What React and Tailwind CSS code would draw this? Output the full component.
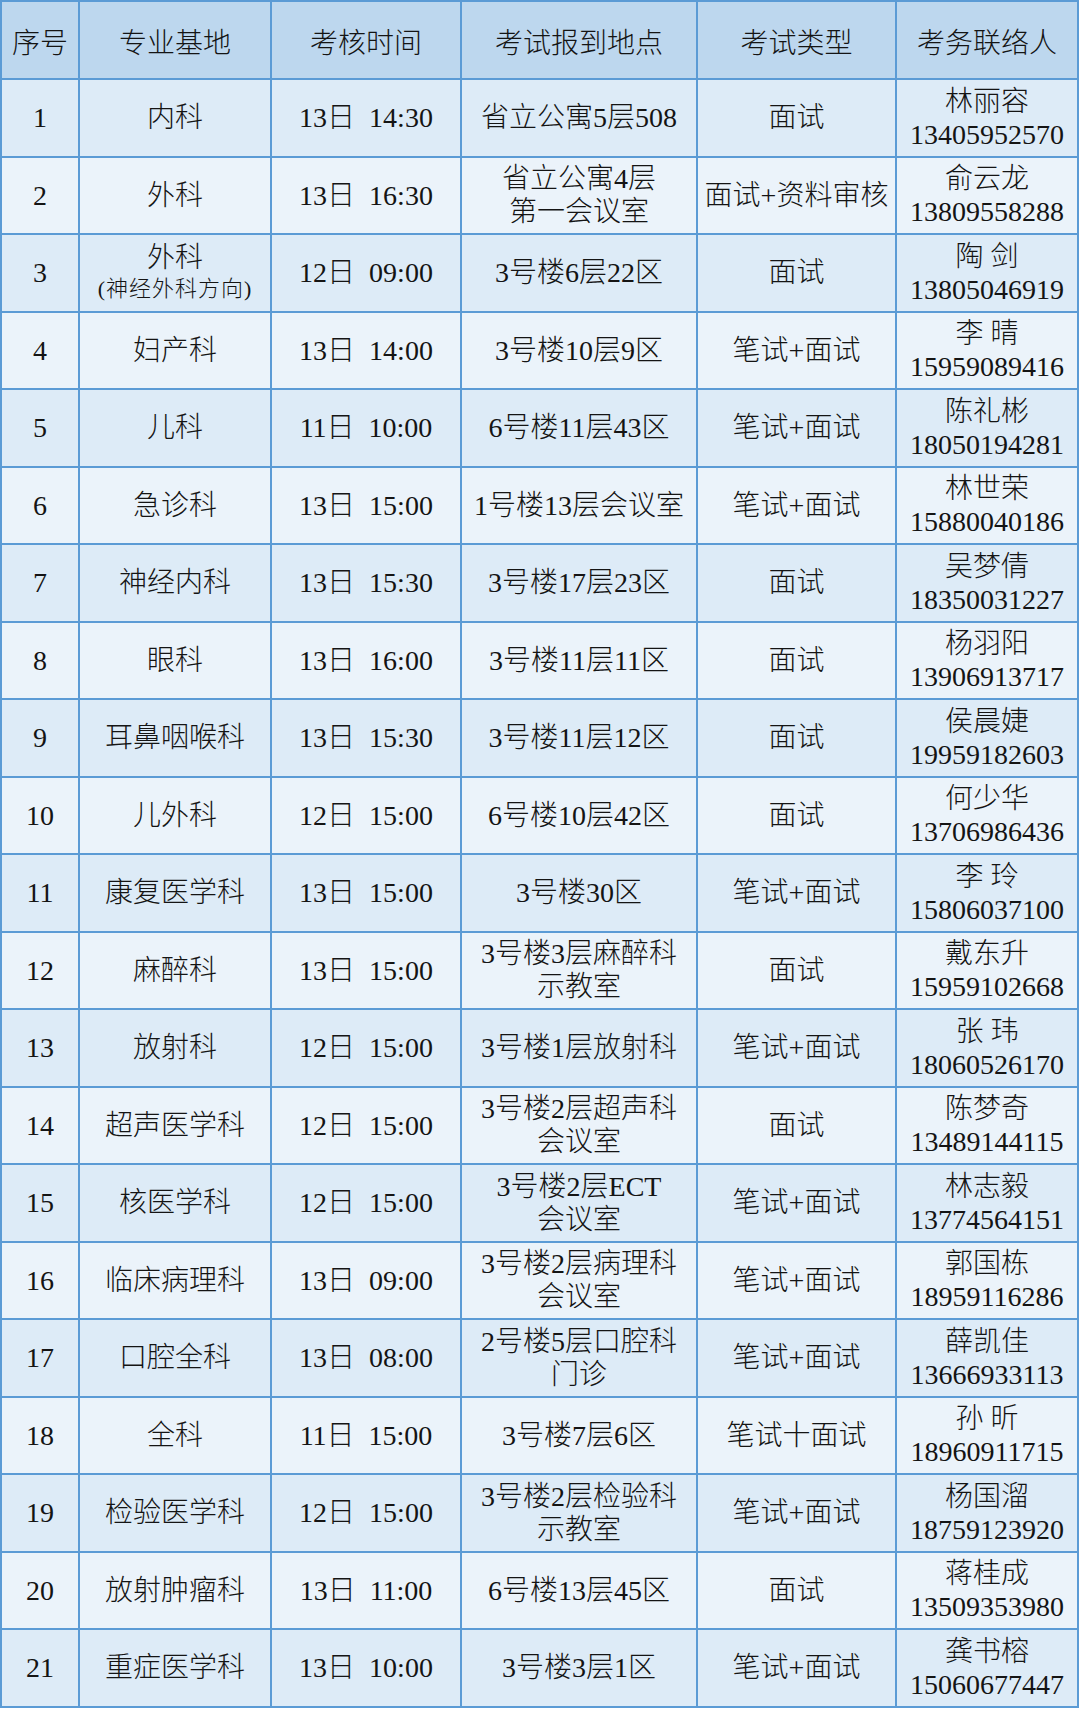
import React from 'react';

const FONT = "font-['Liberation_Serif','Noto_Sans_CJK_SC',serif]";

const COL_WIDTHS = ['w-[78px]', 'w-[192px]', 'w-[190px]', 'w-[236px]', 'w-[199px]', 'w-[182px]'];

const HEADERS = ['序号', '专业基地', '考核时间', '考试报到地点', '考试类型', '考务联络人'];

const ROWS = [
  ['内科', '13日\u00a0\u00a014:30', ['省立公寓5层508'], '面试', '林丽容', '13405952570'],
  ['外科', '13日\u00a0\u00a016:30', ['省立公寓4层', '第一会议室'], '面试+资料审核', '俞云龙', '13809558288'],
  [['外科', '(神经外科方向)'], '12日\u00a0\u00a009:00', ['3号楼6层22区'], '面试', '陶 剑', '13805046919'],
  ['妇产科', '13日\u00a0\u00a014:00', ['3号楼10层9区'], '笔试+面试', '李 晴', '15959089416'],
  ['儿科', '11日\u00a0\u00a010:00', ['6号楼11层43区'], '笔试+面试', '陈礼彬', '18050194281'],
  ['急诊科', '13日\u00a0\u00a015:00', ['1号楼13层会议室'], '笔试+面试', '林世荣', '15880040186'],
  ['神经内科', '13日\u00a0\u00a015:30', ['3号楼17层23区'], '面试', '吴梦倩', '18350031227'],
  ['眼科', '13日\u00a0\u00a016:00', ['3号楼11层11区'], '面试', '杨羽阳', '13906913717'],
  ['耳鼻咽喉科', '13日\u00a0\u00a015:30', ['3号楼11层12区'], '面试', '侯晨婕', '19959182603'],
  ['儿外科', '12日\u00a0\u00a015:00', ['6号楼10层42区'], '面试', '何少华', '13706986436'],
  ['康复医学科', '13日\u00a0\u00a015:00', ['3号楼30区'], '笔试+面试', '李 玲', '15806037100'],
  ['麻醉科', '13日\u00a0\u00a015:00', ['3号楼3层麻醉科', '示教室'], '面试', '戴东升', '15959102668'],
  ['放射科', '12日\u00a0\u00a015:00', ['3号楼1层放射科'], '笔试+面试', '张 玮', '18060526170'],
  ['超声医学科', '12日\u00a0\u00a015:00', ['3号楼2层超声科', '会议室'], '面试', '陈梦奇', '13489144115'],
  ['核医学科', '12日\u00a0\u00a015:00', ['3号楼2层ECT', '会议室'], '笔试+面试', '林志毅', '13774564151'],
  ['临床病理科', '13日\u00a0\u00a009:00', ['3号楼2层病理科', '会议室'], '笔试+面试', '郭国栋', '18959116286'],
  ['口腔全科', '13日\u00a0\u00a008:00', ['2号楼5层口腔科', '门诊'], '笔试+面试', '薛凯佳', '13666933113'],
  ['全科', '11日\u00a0\u00a015:00', ['3号楼7层6区'], '笔试十面试', '孙 昕', '18960911715'],
  ['检验医学科', '12日\u00a0\u00a015:00', ['3号楼2层检验科', '示教室'], '笔试+面试', '杨国溜', '18759123920'],
  ['放射肿瘤科', '13日\u00a0\u00a011:00', ['6号楼13层45区'], '面试', '蒋桂成', '13509353980'],
  ['重症医学科', '13日\u00a0\u00a010:00', ['3号楼3层1区'], '笔试+面试', '龚书榕', '15060677447'],
];

const CELL = 'border-2 border-[#5b9bd5] text-center align-middle p-0 leading-[33px]';

const Lines = ({ lines }) => lines.map((l) => <div key={l}>{l}</div>);

const Base = ({ value }) => {
  if (Array.isArray(value)) {
    return (
      <>
        <div>{value[0]}</div>
        <div className="text-[22px] leading-[30px] tracking-[1px]">{value[1]}</div>
      </>
    );
  }
  return value;
};

export default function App() {
  return (
    <div className={`bg-white w-[1080px] min-h-[1709px] ${FONT} font-light text-[28px] text-[#141414]`}>
      <table className="table-fixed border-collapse w-[1078px]">
        <colgroup>
          {COL_WIDTHS.map((w) => (
            <col key={w} className={w} />
          ))}
        </colgroup>
        <thead>
          <tr className="h-[78px] bg-[#bdd7ee]">
            {HEADERS.map((h) => (
              <th key={h} className={`${CELL} font-light pt-[6px]`}>
                {h}
              </th>
            ))}
          </tr>
        </thead>
        <tbody>
          {ROWS.map(([base, time, place, type, name, phone], i) => (
            <tr key={i} className={`h-[77.5px] ${i % 2 === 0 ? 'bg-[#ddebf7]' : 'bg-[#ebf3fa]'}`}>
              <td className={CELL}>{i + 1}</td>
              <td className={CELL}>
                <Base value={base} />
              </td>
              <td className={CELL}>{time}</td>
              <td className={CELL}>
                <Lines lines={place} />
              </td>
              <td className={CELL}>{type}</td>
              <td className={CELL}>
                <div className="whitespace-pre">{name}</div>
                <div>{phone}</div>
              </td>
            </tr>
          ))}
        </tbody>
      </table>
    </div>
  );
}
